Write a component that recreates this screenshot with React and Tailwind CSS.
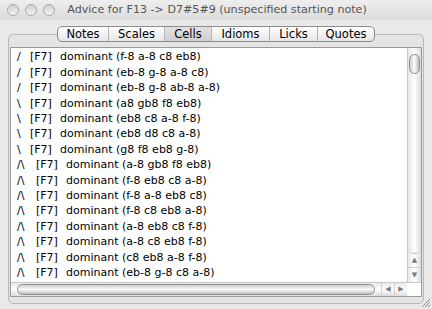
import React from "react"

const rows = [
    ["/", "dominant (f-8 a-8 c8 eb8)"],
    ["/", "dominant (eb-8 g-8 a-8 c8)"],
    ["/", "dominant (eb-8 g-8 ab-8 a-8)"],
    ["\\", "dominant (a8 gb8 f8 eb8)"],
    ["\\", "dominant (eb8 c8 a-8 f-8)"],
    ["\\", "dominant (eb8 d8 c8 a-8)"],
    ["\\", "dominant (g8 f8 eb8 g-8)"],
    ["/\\", "dominant (a-8 gb8 f8 eb8)"],
    ["/\\", "dominant (f-8 eb8 c8 a-8)"],
    ["/\\", "dominant (f-8 a-8 eb8 c8)"],
    ["/\\", "dominant (f-8 c8 eb8 a-8)"],
    ["/\\", "dominant (a-8 eb8 c8 f-8)"],
    ["/\\", "dominant (a-8 c8 eb8 f-8)"],
    ["/\\", "dominant (c8 eb8 a-8 f-8)"],
    ["/\\", "dominant (eb-8 g-8 c8 a-8)"],
    ["/\\", "dominant (eb-8 g-8 f-8 c-8)"],
]

const tabs = [
    ["Notes", "w-[50px]"],
    ["Scales", "w-[56px]"],
    ["Cells", "w-[47px]"],
    ["Idioms", "w-[58px]"],
    ["Licks", "w-[48px]"],
    ["Quotes", "w-[57px]"],
]

function Light() {
    return (
        <div className="h-[12px] w-[12px] rounded-full border border-[#a9a9a9] bg-gradient-to-b from-[#cfcfcf] to-[#f4f4f4]" />
    )
}

export default function App() {
    return (
        <div className="relative h-[309px] w-[432px] overflow-hidden bg-[#e9e9e9] font-['DejaVu_Sans',sans-serif] text-black">
            {/* title bar */}
            <div className="relative flex h-[20px] items-center bg-gradient-to-b from-[#eeeeee] to-[#dcdcdc]">
                <div className="flex gap-[6px] pl-[7px]">
                    <Light />
                    <Light />
                    <Light />
                </div>
                <div className="absolute inset-x-0 top-[2px] pl-[2px] text-center text-[11.1px] leading-[16px] text-[#555]">
                    Advice for F13 -&gt; D7#5#9 (unspecified starting note)
                </div>
            </div>

            {/* tabs */}
            <div className="relative z-10 mt-[6px] flex pl-[57px]">
                <div className="flex h-[16px] overflow-hidden rounded-[5px] border border-[#8c8c8c] bg-gradient-to-b from-[#ffffff] to-[#e6e6e6] text-[11.5px] leading-[14px]">
                    {tabs.map(([t, w], i) => (
                        <div
                            key={t}
                            className={
                                (i > 0 ? "border-l border-[#b4b4b4] " : "") +
                                (t === "Cells" ? "bg-gradient-to-b from-[#e2e2e2] to-[#cfcfcf] " : "") +
                                w +
                                " text-center"
                            }
                        >
                            {t}
                        </div>
                    ))}
                </div>
            </div>

            {/* tab box */}
            <div className="mx-[8px] -mt-[8px] h-[270px] rounded-[5px] border border-[#b9b9b9] bg-[#e4e4e4] px-[1px] pt-[12px]">
                <div className="flex h-[250px] flex-col border border-[#9a9a9a] bg-white">
                    <div className="flex flex-1 overflow-hidden">
                        <div className="flex-1 overflow-hidden pl-[6px] pt-[2px] text-[11px]">
                            {rows.map(([s, d], i) => (
                                <div key={i} className="flex h-[15.4px] items-center whitespace-pre">
                                    <span className={s === "/\\" ? "w-[19px]" : "w-[13px]"}>{s}</span>
                                    <span className="w-[30px]">[F7]</span>
                                    <span>{d}</span>
                                </div>
                            ))}
                        </div>
                        {/* vertical scrollbar */}
                        <div className="flex w-[14px] flex-col border-l border-[#c8c8c8] bg-gradient-to-r from-[#e8e8e8] via-[#ffffff] to-[#dcdcdc]">
                            <div className="mx-auto mt-[6px] h-[20px] w-[11px] rounded-full border border-[#8e8e8e] bg-gradient-to-r from-[#cfcfcf] via-[#fafafa] to-[#bdbdbd]" />
                            <div className="flex-1" />
                            <div className="h-[8px] rounded-b-full border-b border-[#bbbbbb]" />
                            <div className="flex h-[14px] items-center justify-center border-b border-[#d0d0d0] text-[7px] text-[#777]">▲</div>
                            <div className="flex h-[14px] items-center justify-center text-[7px] text-[#777]">▼</div>
                        </div>
                    </div>
                    {/* horizontal scrollbar */}
                    <div className="flex h-[14px] border-t border-[#c8c8c8] bg-gradient-to-b from-[#e8e8e8] via-[#ffffff] to-[#dcdcdc]">
                        <div className="flex-1 px-[6px] py-[1px]">
                            <div className="h-[11px] rounded-full border border-[#8e8e8e] bg-gradient-to-b from-[#cfcfcf] via-[#fafafa] to-[#bdbdbd]" />
                        </div>
                        <div className="flex w-[13px] items-center justify-center border-l border-[#d0d0d0] text-[7px] text-[#777]">◀</div>
                        <div className="flex w-[13px] items-center justify-center border-l border-[#d0d0d0] text-[7px] text-[#777]">▶</div>
                        <div className="w-[14px] bg-white" />
                    </div>
                </div>
            </div>

            {/* resize grip */}
            <svg className="absolute bottom-[1px] right-[1px]" width="12" height="12" viewBox="0 0 12 12">
                <path d="M11 3 L3 11 M11 6 L6 11 M11 9 L9 11" stroke="#8a8a8a" strokeWidth="1" />
            </svg>
        </div>
    )
}
